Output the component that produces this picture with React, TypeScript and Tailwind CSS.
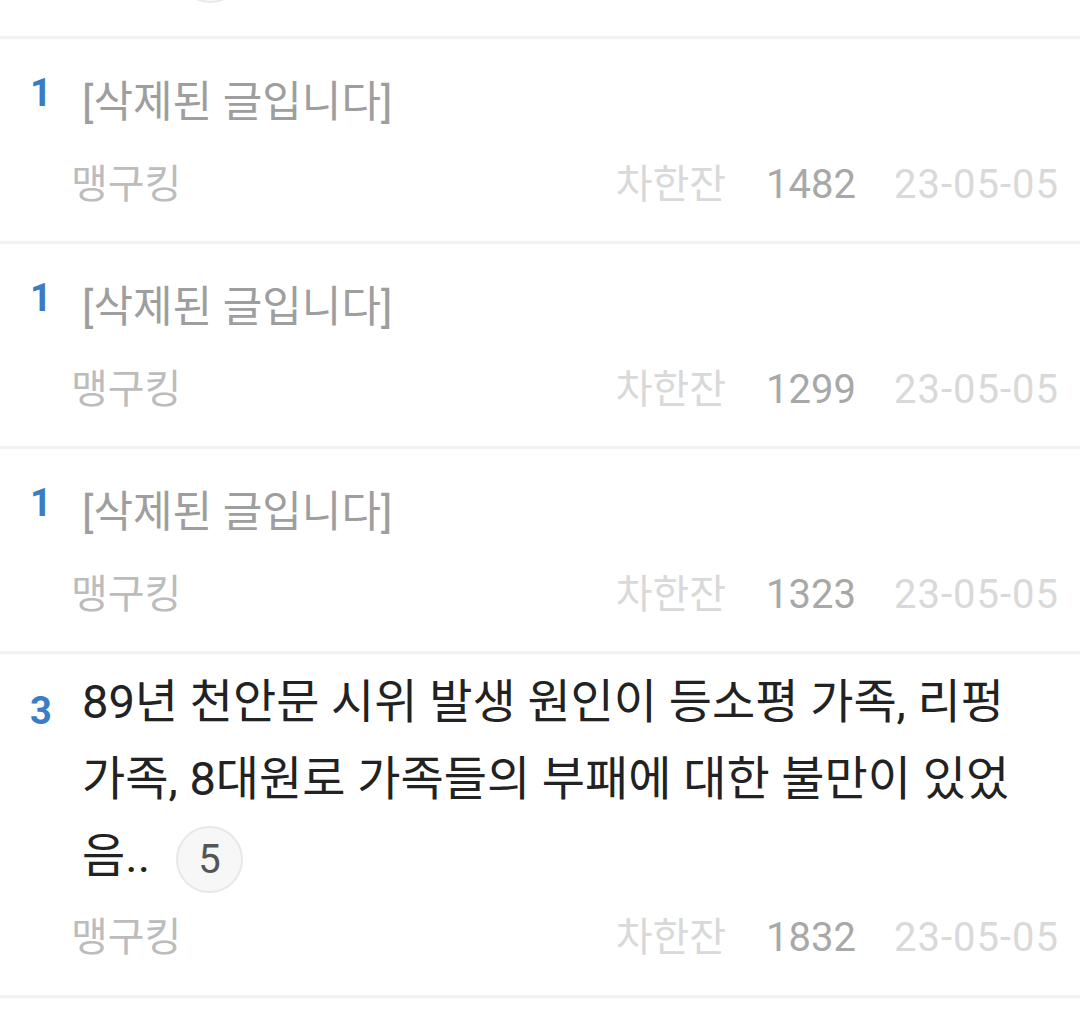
import type { ReactNode } from 'react'

const font = { fontFamily: 'Roboto, "Noto Sans CJK KR", sans-serif' }

interface Post {
  rank: number
  title: string
  deleted?: boolean
  comments?: number
  author: string
  board: string
  views: number
  date: string
}

const posts: Post[] = [
  { rank: 1, title: '[삭제된 글입니다]', deleted: true, author: '맹구킹', board: '차한잔', views: 1482, date: '23-05-05' },
  { rank: 1, title: '[삭제된 글입니다]', deleted: true, author: '맹구킹', board: '차한잔', views: 1299, date: '23-05-05' },
  { rank: 1, title: '[삭제된 글입니다]', deleted: true, author: '맹구킹', board: '차한잔', views: 1323, date: '23-05-05' },
  {
    rank: 3,
    title: '89년 천안문 시위 발생 원인이 등소평 가족, 리펑 가족, 8대원로 가족들의 부패에 대한 불만이 있었음..',
    comments: 5,
    author: '맹구킹',
    board: '차한잔',
    views: 1832,
    date: '23-05-05',
  },
]

function CommentBadge({ count }: { count?: ReactNode }) {
  return (
    <span className="inline-flex h-[67px] w-[67px] items-center justify-center rounded-full border-2 border-[#e8e8e8] bg-[#f7f7f7] align-middle text-[40px] leading-none text-[#555]">
      {count}
    </span>
  )
}

function PostRow({ post }: { post: Post }) {
  return (
    <div
      className={
        post.deleted
          ? 'border-b-[3px] border-[#f2f2f2] pt-[6px] pb-[31px]'
          : 'border-b-[3px] border-[#f2f2f2] pt-[6px] pb-[32px]'
      }
    >
      <div className="flex items-start">
        <span
          className={
            post.deleted
              ? 'mt-[10px] w-[82px] shrink-0 px-[20px] text-center text-[38px] font-bold leading-[77px] text-[#3b7dc4]'
              : 'mt-[13px] w-[82px] shrink-0 px-[20px] text-center text-[38px] font-bold leading-[77px] text-[#3b7dc4]'
          }
        >
          {post.rank}
        </span>
        {post.deleted ? (
          <p className="mt-[19px] text-[43px] leading-[77px] text-[#9e9e9e]">{post.title}</p>
        ) : (
          <p className="mt-[3px] mr-[45px] text-[47px] leading-[77px] text-[#222]">
            {post.title}
            <span className="ml-[26px]">
              <CommentBadge count={post.comments} />
            </span>
          </p>
        )}
      </div>
      <div className="mt-[19px] flex h-[50px] items-center pl-[71px] pr-[21px]">
        <span className="text-[40px] text-[#bcbcbc]">{post.author}</span>
        <span className="ml-auto text-[40px] text-[#d9d9d9]">{post.board}</span>
        <span className="ml-[40px] text-[40px] text-[#a8a8a8]">{post.views}</span>
        <span className="ml-[38px] text-[40px] tracking-[1px] text-[#d9d9d9]">{post.date}</span>
      </div>
    </div>
  )
}

export default function App() {
  return (
    <div className="h-[1014px] w-[1080px] overflow-hidden bg-white" style={font}>
      {/* tail of the previous row, cut off by the top of the screen */}
      <div className="flex h-[39px] flex-col justify-end overflow-hidden border-b-[3px] border-[#f2f2f2]">
        <div className="pb-[33px] pl-[177px]">
          <CommentBadge />
        </div>
      </div>
      {posts.map((post, i) => (
        <PostRow key={i} post={post} />
      ))}
    </div>
  )
}
